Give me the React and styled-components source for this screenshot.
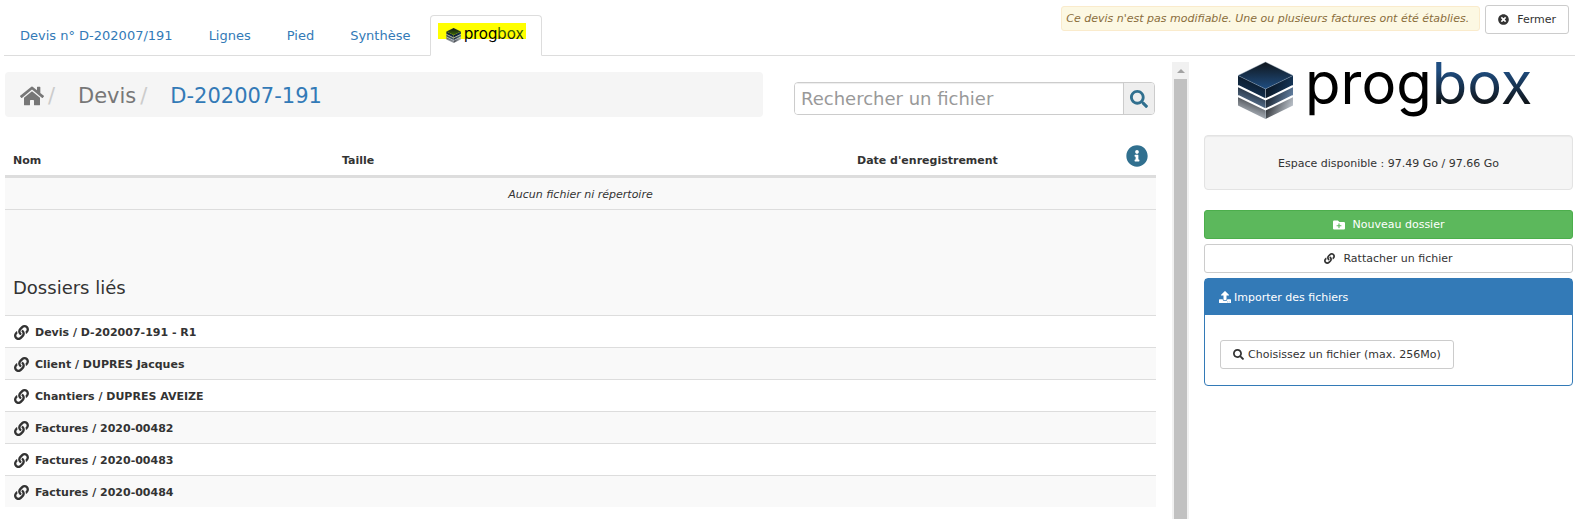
import React from "react";
import styled, { createGlobalStyle, css } from "styled-components";
import { FaHome, FaLink, FaSearch, FaInfoCircle, FaUpload, FaTimesCircle, FaFolderPlus } from "react-icons/fa";

const GlobalStyle = createGlobalStyle`
  *, *::before, *::after { box-sizing: border-box; }
  body {
    margin: 0;
    background: #fff;
    color: #333;
    font-family: Verdana, "DejaVu Sans", sans-serif;
    font-size: 11px;
    line-height: 15px;
  }
  button, input { font-family: inherit; }
  a { color: #337ab7; text-decoration: none; }
  svg { display: block; flex: none; overflow: visible; }
`;

const Page = styled.div`
  display: flex;
  flex-direction: column;
  min-height: 100vh;
  padding: 0 4px;
`;

const Header = styled.header`
  display: flex;
  justify-content: space-between;
  align-items: flex-start;
  border-bottom: 1px solid #ddd;
`;

const Tabs = styled.nav`
  display: flex;
  gap: 4px;
  margin: 15px 0 -1px;
`;

const Tab = styled.a`
  display: flex;
  align-items: center;
  height: 41px;
  padding: 0 15px;
  border: 1px solid transparent;
  border-radius: 4px 4px 0 0;
  font-size: 13px;
  white-space: nowrap;
  ${(p) => p.$active && css`
    background: #fff;
    border-color: #ddd #ddd #fff;
  `}
`;

const Highlight = styled.span`
  display: block;
  height: 16px;
  margin: 0 0 9px -8px;
  padding: 5px 0 0 8px;
  background: #ff0;
`;

const Actions = styled.div`
  display: flex;
  align-items: flex-start;
  gap: 5px;
  padding: 5px 6px 0 0;
`;

const Notice = styled.p`
  margin: 1px 0 0;
  padding: 4px 10px 4px 4px;
  border: 1px solid #faebcc;
  border-radius: 3px;
  background: #fcf8e3;
  color: #8a6d3b;
  font-style: italic;
  white-space: nowrap;
`;

const Button = styled.button`
  display: flex;
  align-items: center;
  justify-content: center;
  gap: ${(p) => p.$gap || 8}px;
  width: ${(p) => (p.$block ? "100%" : "auto")};
  height: 29px;
  padding: 0 12px;
  border: 1px solid ${(p) => (p.$success ? "#4cae4c" : "#ccc")};
  border-radius: 3px;
  background: ${(p) => (p.$success ? "#5cb85c" : "#fff")};
  color: ${(p) => (p.$success ? "#fff" : "#333")};
  font-size: 11px;
  line-height: 15px;
  white-space: nowrap;
`;

const Main = styled.main`
  display: grid;
  grid-template-columns: minmax(0, 1fr) 369px;
  gap: 15px;
  flex: 1;
  padding: 6px 2px 0 1px;
`;

const ScrollArea = styled.div`
  display: grid;
  grid-template-columns: minmax(0, 1fr) 17px;
  gap: 16px;
`;

const ScrollTrack = styled.div`
  display: flex;
  flex-direction: column;
  align-items: center;
  background: #f1f1f1;
`;

const ScrollArrow = styled.span`
  height: 17px;
  padding-top: 7px;
  &::before {
    content: "";
    display: block;
    border: 4px solid transparent;
    border-top: 0;
    border-bottom-color: #a3a3a3;
  }
`;

const ScrollThumb = styled.span`
  flex: 1;
  width: 13px;
  background: #c1c1c1;
`;

const Toolbar = styled.div`
  display: grid;
  grid-template-columns: minmax(0, 1fr) 361px;
  gap: 31px;
  align-items: start;
  padding: 10px 1px 0 0;
`;

const Breadcrumb = styled.nav`
  display: flex;
  align-items: center;
  height: 45px;
  padding: 2px 15px 0;
  border-radius: 4px;
  background: #f5f5f5;
  font-size: 21px;
  line-height: 30px;
`;

const Crumb = styled.a`
  color: ${(p) => (p.$current ? "#337ab7" : "#777")};
`;

const Separator = styled.span`
  width: 34px;
  padding-left: 4px;
  color: #ccc;
`;

const SearchBox = styled.form`
  display: flex;
  height: 33px;
  margin-top: 10px;
  border: 1px solid #ccc;
  border-radius: 4px;
  overflow: hidden;
`;

const SearchInput = styled.input`
  flex: 1;
  min-width: 0;
  padding: 0 6px;
  border: 0;
  background: #fff;
  box-shadow: inset 0 1px 1px rgba(0, 0, 0, 0.075);
  color: #555;
  font-size: 18px;
  &::placeholder { color: #999; opacity: 1; }
`;

const SearchButton = styled.button`
  display: flex;
  align-items: center;
  justify-content: center;
  width: 31px;
  padding: 0;
  border: 0;
  border-left: 1px solid #ccc;
  background: #eee;
  color: #31708f;
`;

const FileTable = styled.table`
  width: 100%;
  margin-top: 20px;
  border-collapse: separate;
  border-spacing: 0;
  table-layout: fixed;
`;

const HeadCell = styled.th`
  width: ${(p) => p.$width || "auto"};
  height: 41px;
  padding: 0 8px 7px;
  border-bottom: 3px solid #ddd;
  text-align: left;
  vertical-align: bottom;
  svg { margin: 0 0 1px auto; color: #31708f; }
`;

const Row = styled.tr`
  background: ${(p) => (p.$shaded ? "#f9f9f9" : "#fff")};
`;

const Cell = styled.td`
  height: ${(p) => (p.$first ? 31 : 32)}px;
  padding: 2px 8px 0;
  border-top: ${(p) => (p.$first ? 0 : 1)}px solid #ddd;
  text-align: ${(p) => (p.$first ? "center" : "left")};
  font-style: ${(p) => (p.$first ? "italic" : "normal")};
`;

const SectionCell = styled(Cell)`
  height: 106px;
  padding-bottom: 17px;
  vertical-align: bottom;
`;

const SectionTitle = styled.h2`
  margin: 0;
  font-size: 18px;
  font-weight: 400;
  line-height: 20px;
`;

const FolderLink = styled.a`
  display: flex;
  align-items: center;
  gap: 6px;
  padding-left: 1px;
  color: #333;
  font-weight: 700;
`;

const Sidebar = styled.aside`
  display: flex;
  flex-direction: column;
  gap: 5px;
`;

const Brand = styled.div`
  display: flex;
  justify-content: center;
  margin-bottom: 11px;
`;

const Quota = styled.p`
  margin: 0 0 15px;
  padding: 20px 19px 18px;
  border: 1px solid #e3e3e3;
  border-radius: 4px;
  background: #f5f5f5;
  box-shadow: inset 0 1px 1px rgba(0, 0, 0, 0.05);
  text-align: center;
`;

const Panel = styled.section`
  border: 1px solid #337ab7;
  border-radius: 4px;
`;

const PanelTitle = styled.h3`
  display: flex;
  align-items: center;
  gap: 3px;
  height: 36px;
  margin: 0;
  padding: 0 14px;
  background: #337ab7;
  color: #fff;
  font-size: 11px;
  font-weight: 400;
`;

const PanelBody = styled.div`
  display: flex;
  padding: 25px 15px 16px;
`;

function Layer({ y, fill }) {
  return (
    <g>
      <path d={`M0 ${y}L27.500 ${y + 13.5}V${y + 24}L0 ${y + 10.500}Z`} fill={`url(#${fill}-left)`} />
      <path d={`M55 ${y}L27.500 ${y + 13.5}V${y + 24}L55 ${y + 10.500}Z`} fill={`url(#${fill}-right)`} />
      <path d={`M27.500 ${y + 13.5}V${y + 24}`} stroke="#b9c6d3" strokeWidth="0.5" />
    </g>
  );
}

function Logo({ id, width, height, accent = "#1f4e82" }) {
  const shades = [["a", "#16395f", "#08121d", 1], ["b", "#5b7ea6", "#10161e", 0.9], ["c", "#b4bdc8", "#15181c", 0.75]];
  return (
    <svg width={width} height={height} viewBox="0 0 301 57" role="img" aria-label="progbox">
      <defs>
        <linearGradient id={`${id}-top`} x1="0" y1="0" x2="0" y2="1">
          <stop offset="0" stopColor="#10161c" />
          <stop offset="1" stopColor={accent} />
        </linearGradient>
        <linearGradient id={`${id}-word`} gradientUnits="userSpaceOnUse" x1="0" y1="8" x2="0" y2="42">
          <stop offset="0" stopColor={accent} />
          <stop offset="1" stopColor="#101418" />
        </linearGradient>
        {shades.map(([k, light, dark, opacity]) => (
          <React.Fragment key={k}>
            <linearGradient id={`${id}-${k}-left`} x1="0.3" y1="1" x2="0.7" y2="0">
              <stop offset="0" stopColor={light} stopOpacity={opacity} />
              <stop offset="1" stopColor={dark} />
            </linearGradient>
            <linearGradient id={`${id}-${k}-right`} x1="0" y1="0.3" x2="1" y2="0.7">
              <stop offset="0" stopColor={dark} />
              <stop offset="1" stopColor={light} stopOpacity={opacity} />
            </linearGradient>
          </React.Fragment>
        ))}
      </defs>
      <Layer y={33} fill={`${id}-c`} />
      <Layer y={24} fill={`${id}-b`} />
      <path d="M0 24L27.500 37.500L55 24" fill="none" stroke="#fff" strokeWidth="2" transform="translate(0 10)" />
      <Layer y={13.5} fill={`${id}-a`} />
      <path d="M0 24L27.500 37.500L55 24" fill="none" stroke="#fff" strokeWidth="2" />
      <path d="M27.500 0L55 13.500L27.500 27L0 13.500Z" fill={`url(#${id}-top)`} stroke="#8fa3b8" strokeWidth="0.4" />
      <text x="67" y="42" fontFamily="Inter, sans-serif" fontSize="58" fill="#000">
        prog<tspan fill={`url(#${id}-word)`}>box</tspan>
      </text>
    </svg>
  );
}

const folders = [
  "Devis / D-202007-191 - R1",
  "Client / DUPRES Jacques",
  "Chantiers / DUPRES AVEIZE",
  "Factures / 2020-00482",
  "Factures / 2020-00483",
  "Factures / 2020-00484",
];

export default function App() {
  return (
    <Page>
      <GlobalStyle />
      <Header>
        <Tabs>
          <Tab href="#devis">Devis n° D-202007/191</Tab>
          <Tab href="#lignes">Lignes</Tab>
          <Tab href="#pied">Pied</Tab>
          <Tab href="#synthese">Synthèse</Tab>
          <Tab href="#progbox" $active aria-current="page">
            <Highlight><Logo id="tab" width={80} height={15} accent="#3d6b00" /></Highlight>
          </Tab>
        </Tabs>
        <Actions>
          <Notice>Ce devis n'est pas modifiable. Une ou plusieurs factures ont été établies.</Notice>
          <Button type="button"><FaTimesCircle size={11} />Fermer</Button>
        </Actions>
      </Header>

      <Main>
        <ScrollArea>
          <div>
            <Toolbar>
              <Breadcrumb aria-label="Répertoire">
                <Crumb href="#accueil" aria-label="Accueil"><FaHome size={24} /></Crumb>
                <Separator>/</Separator>
                <Crumb href="#liste">Devis</Crumb>
                <Separator>/</Separator>
                <Crumb href="#dossier" $current>D-202007-191</Crumb>
              </Breadcrumb>
              <SearchBox>
                <SearchInput type="search" placeholder="Rechercher un fichier" aria-label="Rechercher un fichier" />
                <SearchButton type="button" aria-label="Rechercher"><FaSearch size={18} /></SearchButton>
              </SearchBox>
            </Toolbar>

            <FileTable>
              <thead>
                <tr>
                  <HeadCell $width="329px">Nom</HeadCell>
                  <HeadCell>Taille</HeadCell>
                  <HeadCell $width="260px">Date d'enregistrement</HeadCell>
                  <HeadCell $width="47px"><FaInfoCircle size={22} /></HeadCell>
                </tr>
              </thead>
              <tbody>
                <Row $shaded><Cell colSpan={4} $first>Aucun fichier ni répertoire</Cell></Row>
                <Row $shaded>
                  <SectionCell colSpan={4}><SectionTitle>Dossiers liés</SectionTitle></SectionCell>
                </Row>
                {folders.map((name, i) => (
                  <Row key={name} $shaded={i % 2 === 1}>
                    <Cell colSpan={4}>
                      <FolderLink href="#dossier-lie"><FaLink size={15} />{name}</FolderLink>
                    </Cell>
                  </Row>
                ))}
              </tbody>
            </FileTable>
          </div>
          <ScrollTrack aria-hidden="true"><ScrollArrow /><ScrollThumb /></ScrollTrack>
        </ScrollArea>

        <Sidebar>
          <Brand><Logo id="brand" width={301} height={57} /></Brand>
          <Quota>Espace disponible : 97.49 Go / 97.66 Go</Quota>
          <Button type="button" $block $success><FaFolderPlus size={12} />Nouveau dossier</Button>
          <Button type="button" $block><FaLink size={11} />Rattacher un fichier</Button>
          <Panel>
            <PanelTitle><FaUpload size={12} />Importer des fichiers</PanelTitle>
            <PanelBody>
              <Button type="button" $gap={4}><FaSearch size={11} />Choisissez un fichier (max. 256Mo)</Button>
            </PanelBody>
          </Panel>
        </Sidebar>
      </Main>
    </Page>
  );
}
